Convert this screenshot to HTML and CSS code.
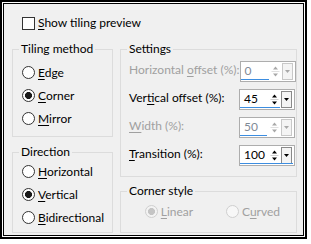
FILE: index.html
```html
<!DOCTYPE html>
<html lang="en">
<head>
  <meta charset="UTF-8" />
  <title>Tiling options</title>
  <link rel="stylesheet" href="styles.css">
</head>
<body>
  <div class="frame">
    <div class="dialog">
      <div class="check"><span class="box"></span><span><u>S</u>how tiling preview</span></div>

      <div class="cols">
        <div class="col">
          <fieldset class="group tiling">
            <legend>Tiling method</legend>
            <div class="radio"><span class="ring"></span><span><u>E</u>dge</span></div>
            <div class="radio"><span class="ring on"></span><span><u>C</u>orner</span></div>
            <div class="radio"><span class="ring"></span><span><u>M</u>irror</span></div>
          </fieldset>

          <fieldset class="group direction">
            <legend>Direction</legend>
            <div class="radio"><span class="ring"></span><span><u>H</u>orizontal</span></div>
            <div class="radio"><span class="ring on"></span><span><u>V</u>ertical</span></div>
            <div class="radio"><span class="ring"></span><span><u>B</u>idirectional</span></div>
          </fieldset>
        </div>

        <div class="col">
          <fieldset class="group settings">
            <legend>Settings</legend>

            <div class="row off">
              <span class="lbl">Horizontal <u>o</u>ffset (%):</span>
              <div class="spin">
                <div class="field"><span class="val">0</span><i class="bar" style="width:28px"></i></div>
                <svg class="btns" width="24" height="19" viewBox="0 0 24 19">
                  <path d="M3 7.5h5l-2.5-3z M3 11.5h5l-2.5 3z" />
                  <path class="sep" d="M1.5 9.5h8" />
                  <rect class="drop" x="12.5" y="1.5" width="10" height="16" />
                  <path d="M15 8h5l-2.5 3z" />
                </svg>
              </div>
            </div>

            <div class="row">
              <span class="lbl">Ver<u>t</u>ical offset (%):</span>
              <div class="spin">
                <div class="field"><span class="val">45</span><i class="bar" style="width:40px"></i></div>
                <svg class="btns" width="24" height="19" viewBox="0 0 24 19">
                  <path d="M3 7.5h5l-2.5-3z M3 11.5h5l-2.5 3z" />
                  <path class="sep" d="M1.5 9.5h8" />
                  <rect class="drop" x="12.5" y="1.5" width="10" height="16" />
                  <path d="M15 8h5l-2.5 3z" />
                </svg>
              </div>
            </div>

            <div class="row off">
              <span class="lbl"><u>W</u>idth (%):</span>
              <div class="spin">
                <div class="field"><span class="val">50</span><i class="bar" style="width:27px"></i></div>
                <svg class="btns" width="24" height="19" viewBox="0 0 24 19">
                  <path d="M3 7.5h5l-2.5-3z M3 11.5h5l-2.5 3z" />
                  <path class="sep" d="M1.5 9.5h8" />
                  <rect class="drop" x="12.5" y="1.5" width="10" height="16" />
                  <path d="M15 8h5l-2.5 3z" />
                </svg>
              </div>
            </div>

            <div class="row">
              <span class="lbl"><u>T</u>ransition (%):</span>
              <div class="spin">
                <div class="field"><span class="val">100</span><i class="bar" style="width:53px"></i></div>
                <svg class="btns" width="24" height="19" viewBox="0 0 24 19">
                  <path d="M3 7.5h5l-2.5-3z M3 11.5h5l-2.5 3z" />
                  <path class="sep" d="M1.5 9.5h8" />
                  <rect class="drop" x="12.5" y="1.5" width="10" height="16" />
                  <path d="M15 8h5l-2.5 3z" />
                </svg>
              </div>
            </div>
          </fieldset>

          <fieldset class="group corner">
            <legend>Corner style</legend>
            <div class="pair">
              <div class="radio off"><span class="ring on"></span><span><u>L</u>inear</span></div>
              <div class="radio off"><span class="ring"></span><span>C<u>u</u>rved</span></div>
            </div>
          </fieldset>
        </div>
      </div>
    </div>
  </div>
</body>
</html>
```

FILE: styles.css
```css
body {
  margin: 0;
  background-color: #fff;
  font-family: Lato, 'Noto Sans', sans-serif;
  font-size: 12px;
  line-height: 16px;
  color: #000;
}
u {
  text-decoration-thickness: 1px;
  text-underline-offset: 2px;
}
.frame {
  width: 301px;
  border: 2px solid #000;
  padding: 1px;
  background-color: #fff;
}
.dialog {
  border: 1px solid #000;
  background-color: #f0f0f0;
  padding: 11px 6px 0 8px;
  height: 220px;
}
.check {
  display: flex;
  align-items: center;
  gap: 3px;
  margin-left: 10px;
  height: 16px;
}
.box {
  width: 13px;
  height: 13px;
  box-sizing: border-box;
  border: 1px solid #333;
  background-color: #fff;
}
.cols {
  display: flex;
  gap: 7px;
  margin-top: 10px;
}
.col {
  display: flex;
  flex-direction: column;
}
.col:first-child { width: 101px; gap: 7px; }
.col:last-child { width: 177px; gap: 6px; }
.group {
  margin: 0;
  border: 1px solid #dcdcdc;
  padding: 0 1px 0 6px;
  box-sizing: border-box;
  min-width: 0;
}
.group legend {
  padding: 0 2px;
  line-height: 16px;
}
.tiling { height: 96px; padding-top: 4px; }
.direction { height: 89px; }
.settings { height: 136px; padding-top: 4px; }
.corner { height: 50px; padding-top: 1px; }
.radio {
  display: flex;
  align-items: center;
  gap: 3px;
  height: 23px;
  padding-left: 3px;
  white-space: nowrap;
}
.ring {
  width: 13px;
  height: 13px;
  box-sizing: border-box;
  border: 1px solid #333;
  border-radius: 50%;
  background-color: #fff;
}
.ring.on {
  background: radial-gradient(circle, #1a1a1a 0 3.2px, #fff 3.8px);
}
.radio.off {
  color: #a0a0a0;
}
.radio.off .ring {
  border-color: #cfcfcf;
  background-color: #f7f7f7;
}
.radio.off .ring.on {
  background: radial-gradient(circle, #c4c4c4 0 3.2px, #f3f3f3 3.8px);
}
.pair {
  display: grid;
  grid-template-columns: 1fr 1fr;
  justify-items: center;
}
.pair .radio { padding-left: 0; }
.row {
  display: flex;
  justify-content: space-between;
  height: 21px;
  padding-left: 2px;
  margin-bottom: 7px;
}
.lbl {
  margin-top: 1px;
  white-space: nowrap;
}
.row.off .lbl { color: #a0a0a0; }
.spin {
  display: flex;
  flex: none;
  width: 56px;
  height: 21px;
  box-sizing: border-box;
  border: 1px solid #adadad;
  background-color: #fff;
}
.field {
  width: 30px;
  display: flex;
  flex-direction: column;
}
.val {
  padding: 1px 0 0 4px;
  line-height: 16px;
}
.row.off .val { color: #7f8a96; }
.bar {
  display: block;
  height: 2px;
  margin-top: auto;
  margin-bottom: 1px;
  background-color: #3c8de0;
  position: relative;
  z-index: 1;
}
.btns {
  display: block;
  margin-left: -1px;
}
.btns path { fill: #000; }
.btns .sep { fill: none; stroke: #d0d0d0; }
.btns .drop { fill: #f4f4f4; stroke: #8a8a8a; }
.row.off .btns path { fill: #a8a8a8; }
.row.off .btns .sep { stroke: #e0e0e0; }
.row.off .btns .drop { stroke: #c8c8c8; }
```
